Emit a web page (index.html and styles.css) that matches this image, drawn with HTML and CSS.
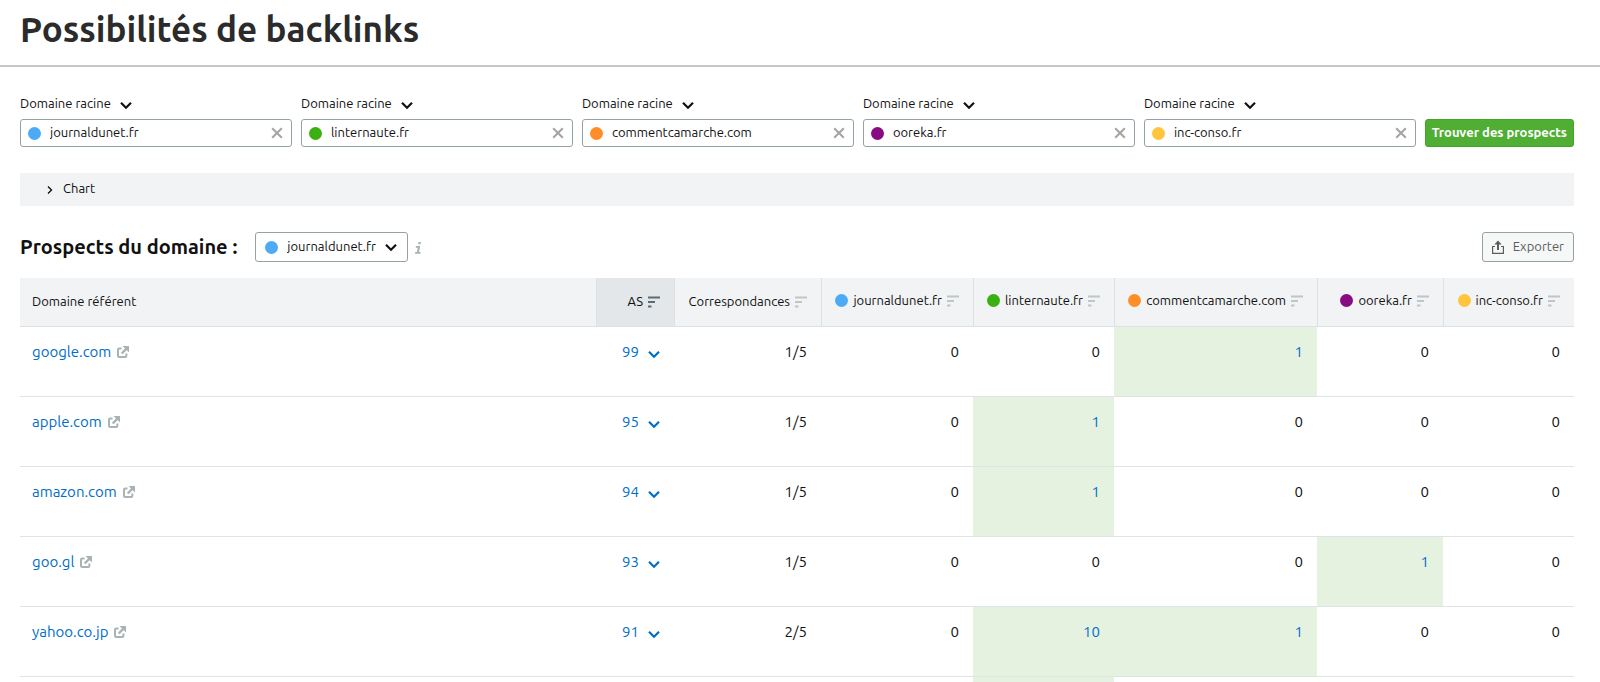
FILE: index.html
```html
<!DOCTYPE html>
<html lang="fr">
<head>
<meta charset="utf-8">
<meta name="viewport" content="width=device-width, initial-scale=1">
<title>Possibilités de backlinks</title>
<link rel="stylesheet" href="styles.css">
</head>
<body>
<svg class="sprite" aria-hidden="true">
  <symbol id="chevron" viewBox="0 0 12 12"><path d="M1 3.800 6 8.800 11 3.800" fill="none" stroke="currentColor" stroke-width="2.2"/></symbol>
  <symbol id="arrow-right" viewBox="0 0 6 10"><path d="M1 1.5 4.5 5 1 8.5" fill="none" stroke="currentColor" stroke-width="1.4"/></symbol>
  <symbol id="cross" viewBox="0 0 12 12"><path d="M1.2 1.2l9.6 9.6M10.8 1.2 1.2 10.8" fill="none" stroke="currentColor" stroke-width="2.1"/></symbol>
  <symbol id="sort" viewBox="0 0 12 12"><path d="M0 1.5h12M0 6h7M0 10.5h3.5" fill="none" stroke="currentColor" stroke-width="2"/></symbol>
  <symbol id="external" viewBox="0 0 12 12"><path d="M4.5 2.6H2.2Q1 2.6 1 3.8v6Q1 11 2.2 11h6Q9.4 11 9.4 9.800V7.500" fill="none" stroke="currentColor" stroke-width="2"/><path d="M4.700 7.500 9.500 2.700" fill="none" stroke="currentColor" stroke-width="2.400"/><path d="M5.500 0H12v6.500z" fill="currentColor"/></symbol>
  <symbol id="upload" viewBox="0 0 12 14"><path d="M3 6.500H.6v6.900h10.800V6.500H9" fill="none" stroke="currentColor" stroke-width="1.200"/><path d="M6 10V3" fill="none" stroke="currentColor" stroke-width="2"/><path d="M2.300 4.500 6 .4l3.700 4.100z" fill="currentColor"/></symbol>
  <symbol id="info" viewBox="0 0 7 12"><path d="M3.600 0h2.400l-.5 2.200H3.100zM1 4h4.200L4 10h1.700l-.3 1.700H0L.3 10h1.600l.8-4.300H.7z" fill="currentColor"/></symbol>
</svg>

<header class="page-header"><h1 class="page-title">Possibilités de backlinks</h1></header>

<main class="content">
  <form class="compare" onsubmit="return false">
    <div class="field">
      <span class="picker"><select class="picker-select" aria-label="Type de cible 1"><option>Domaine racine</option></select><svg class="chevron"><use href="#chevron"/></svg></span>
      <div class="box"><span class="dot blue"></span><input class="box-input" aria-label="Domaine 1" value="journaldunet.fr"><button class="clear" type="button" aria-label="Effacer"><svg class="cross"><use href="#cross"/></svg></button></div>
    </div>
    <div class="field">
      <span class="picker"><select class="picker-select" aria-label="Type de cible 2"><option>Domaine racine</option></select><svg class="chevron"><use href="#chevron"/></svg></span>
      <div class="box"><span class="dot green"></span><input class="box-input" aria-label="Domaine 2" value="linternaute.fr"><button class="clear" type="button" aria-label="Effacer"><svg class="cross"><use href="#cross"/></svg></button></div>
    </div>
    <div class="field">
      <span class="picker"><select class="picker-select" aria-label="Type de cible 3"><option>Domaine racine</option></select><svg class="chevron"><use href="#chevron"/></svg></span>
      <div class="box"><span class="dot orange"></span><input class="box-input" aria-label="Domaine 3" value="commentcamarche.com"><button class="clear" type="button" aria-label="Effacer"><svg class="cross"><use href="#cross"/></svg></button></div>
    </div>
    <div class="field">
      <span class="picker"><select class="picker-select" aria-label="Type de cible 4"><option>Domaine racine</option></select><svg class="chevron"><use href="#chevron"/></svg></span>
      <div class="box"><span class="dot purple"></span><input class="box-input" aria-label="Domaine 4" value="ooreka.fr"><button class="clear" type="button" aria-label="Effacer"><svg class="cross"><use href="#cross"/></svg></button></div>
    </div>
    <div class="field">
      <span class="picker"><select class="picker-select" aria-label="Type de cible 5"><option>Domaine racine</option></select><svg class="chevron"><use href="#chevron"/></svg></span>
      <div class="box"><span class="dot yellow"></span><input class="box-input" aria-label="Domaine 5" value="inc-conso.fr"><button class="clear" type="button" aria-label="Effacer"><svg class="cross"><use href="#cross"/></svg></button></div>
    </div>
    <button class="submit" type="submit">Trouver des prospects</button>
  </form>

  <button class="chart-toggle" type="button" aria-expanded="false"><svg class="arrow"><use href="#arrow-right"/></svg>Chart</button>

  <div class="toolbar">
    <h2 class="section-title"><label for="target">Prospects du domaine :</label></h2>
    <span class="target"><span class="dot blue"></span><span class="picker"><select class="picker-select" id="target"><option>journaldunet.fr</option></select><svg class="chevron"><use href="#chevron"/></svg></span></span>
    <svg class="info" role="img" aria-label="Information"><use href="#info"/></svg>
    <button class="export" type="button"><svg class="upload"><use href="#upload"/></svg>Exporter</button>
  </div>

  <table class="prospects">
    <colgroup><col><col class="c-as"><col class="c-match"><col class="c-blue"><col class="c-green"><col class="c-orange"><col class="c-purple"><col class="c-yellow"></colgroup>
    <thead>
      <tr>
        <th class="name">Domaine référent</th>
        <th class="sorted"><button class="sort">AS<svg class="sort-icon"><use href="#sort"/></svg></button></th>
        <th><button class="sort">Correspondances<svg class="sort-icon"><use href="#sort"/></svg></button></th>
        <th class="domain"><button class="sort"><span class="dot blue"></span>journaldunet.fr<svg class="sort-icon"><use href="#sort"/></svg></button></th>
        <th class="domain"><button class="sort"><span class="dot green"></span>linternaute.fr<svg class="sort-icon"><use href="#sort"/></svg></button></th>
        <th class="domain"><button class="sort"><span class="dot orange"></span>commentcamarche.com<svg class="sort-icon"><use href="#sort"/></svg></button></th>
        <th class="domain"><button class="sort"><span class="dot purple"></span>ooreka.fr<svg class="sort-icon"><use href="#sort"/></svg></button></th>
        <th class="domain"><button class="sort"><span class="dot yellow"></span>inc-conso.fr<svg class="sort-icon"><use href="#sort"/></svg></button></th>
      </tr>
    </thead>
    <tbody>
      <tr><td class="name"><a class="link" href="#">google.com<svg class="external"><use href="#external"/></svg></a></td><td><button class="score">99<svg class="chevron"><use href="#chevron"/></svg></button></td><td>1/5</td><td>0</td><td>0</td><td class="hit"><a href="#">1</a></td><td>0</td><td>0</td></tr>
      <tr><td class="name"><a class="link" href="#">apple.com<svg class="external"><use href="#external"/></svg></a></td><td><button class="score">95<svg class="chevron"><use href="#chevron"/></svg></button></td><td>1/5</td><td>0</td><td class="hit"><a href="#">1</a></td><td>0</td><td>0</td><td>0</td></tr>
      <tr><td class="name"><a class="link" href="#">amazon.com<svg class="external"><use href="#external"/></svg></a></td><td><button class="score">94<svg class="chevron"><use href="#chevron"/></svg></button></td><td>1/5</td><td>0</td><td class="hit"><a href="#">1</a></td><td>0</td><td>0</td><td>0</td></tr>
      <tr><td class="name"><a class="link" href="#">goo.gl<svg class="external"><use href="#external"/></svg></a></td><td><button class="score">93<svg class="chevron"><use href="#chevron"/></svg></button></td><td>1/5</td><td>0</td><td>0</td><td>0</td><td class="hit"><a href="#">1</a></td><td>0</td></tr>
      <tr><td class="name"><a class="link" href="#">yahoo.co.jp<svg class="external"><use href="#external"/></svg></a></td><td><button class="score">91<svg class="chevron"><use href="#chevron"/></svg></button></td><td>2/5</td><td>0</td><td class="hit"><a href="#">10</a></td><td class="hit"><a href="#">1</a></td><td>0</td><td>0</td></tr>
      <tr class="next"><td></td><td></td><td></td><td></td><td class="hit"></td><td></td><td></td><td></td></tr>
    </tbody>
  </table>
</main>
</body>
</html>
```
FILE: styles.css
```css
* { box-sizing: border-box; }
body {
  margin: 0;
  background: #fff;
  color: #111;
  font: 13px/20px "Ubuntu", "Noto Sans", sans-serif;
}
button, input, select {
  margin: 0;
  padding: 0;
  border: 0;
  background: none;
  color: inherit;
  font: inherit;
}
button, select { cursor: pointer; }
svg { display: block; flex: none; }
.sprite { display: none; }

.page-header {
  padding: 6px 20px 13px;
  border-bottom: 2px solid #c6c6c6;
}
.page-title {
  margin: 0;
  color: #2b2b2b;
  font-size: 35px;
  font-weight: 600;
  line-height: 46px;
}
.content { padding: 26px 26px 0 20px; }

.dot {
  flex: none;
  width: 13px;
  height: 13px;
  border-radius: 50%;
}
.blue { background: #4dabf5; }
.green { background: #3ab011; }
.orange { background: #ff8e29; }
.purple { background: #880b82; }
.yellow { background: #ffc53d; }

.compare {
  display: flex;
  align-items: flex-end;
  gap: 9px;
}
.field { flex: 1; min-width: 0; }
.picker {
  display: inline-flex;
  align-items: center;
  gap: 9px;
}
.picker-select { appearance: none; }
.chevron { width: 12px; height: 12px; margin-top: 3px; }
.field .picker { display: flex; margin-bottom: 6px; }
.box {
  display: flex;
  align-items: center;
  height: 28px;
  padding: 0 8px 0 7px;
  border: 1px solid #94a2a8;
  border-radius: 3px;
}
.box-input {
  flex: 1;
  min-width: 0;
  margin-left: 9px;
  height: 24px;
  padding-bottom: 2px;
  outline: 0;
}
.clear { color: #a5a5a5; }
.cross { width: 12px; height: 12px; }
.submit {
  height: 28px;
  padding: 0 6px 2px;
  border: 1px solid #3fa823;
  border-radius: 3px;
  background: #4fae33;
  color: #fff;
  font-weight: 600;
  white-space: nowrap;
}

.chart-toggle {
  display: flex;
  align-items: center;
  gap: 10px;
  width: 100%;
  height: 33px;
  margin-top: 26px;
  padding: 0 27px 3px;
  background: #f1f3f5;
}
.arrow { width: 6px; height: 10px; margin-top: 4px; }

.toolbar {
  display: flex;
  align-items: center;
  height: 30px;
  margin: 26px 0 16px;
}
.section-title {
  margin: 0 18px 0 0;
  font-size: 20px;
  font-weight: 600;
}
.target {
  display: flex;
  align-items: center;
  gap: 9px;
  height: 30px;
  padding: 0 10px 0 9px;
  border: 1px solid #94a2a8;
  border-radius: 3px;
}
.target .picker { padding-bottom: 3px; }
.info {
  width: 7px;
  height: 12px;
  margin: 2px 0 0 7px;
  color: #a9b1b4;
}
.export {
  display: flex;
  align-items: center;
  gap: 9px;
  height: 30px;
  margin-left: auto;
  padding: 0 9px 2px;
  border: 1px solid #94a2a8;
  border-radius: 3px;
  background: #f6f8f8;
  color: #5d5d5d;
}
.upload { width: 12px; height: 14px; margin-top: 2px; }

.prospects {
  width: 100%;
  border-collapse: separate;
  border-spacing: 0;
  table-layout: fixed;
}
.c-as { width: 78px; }
.c-match { width: 147px; }
.c-blue { width: 152px; }
.c-green { width: 141px; }
.c-orange { width: 203px; }
.c-purple { width: 126px; }
.c-yellow { width: 131px; }

.prospects th {
  height: 49px;
  padding: 0 14px 2px 0;
  border-bottom: 1px solid #dce1e4;
  border-left: 1px solid #dce2e4;
  background: #f1f3f5;
  font-weight: 400;
  text-align: right;
}
.prospects .domain { padding-bottom: 4px; }
.prospects th.name { border-left: 0; }
.prospects th.sorted { background: #e4e7e9; }
.sort {
  display: flex;
  align-items: center;
  gap: 5px;
  margin-left: auto;
  white-space: nowrap;
}
.sort-icon { width: 12px; height: 12px; margin-top: 2px; color: #bfc6c9; }
.sorted .sort-icon { color: #5a6d75; }

.prospects td {
  height: 70px;
  padding: 15px 14px 0 0;
  border-bottom: 1px solid #dfe5e6;
  font-size: 15px;
  text-align: right;
  vertical-align: top;
}
.prospects .name { padding-left: 12px; text-align: left; }
.prospects a, .score { color: #006dca; text-decoration: none; }
.link, .score { display: inline-flex; align-items: center; gap: 6px; }
.score { gap: 9px; }
.external { width: 12px; height: 12px; color: #a9b3b5; }
.prospects .hit { background: #e5f2e0; }
.prospects .next td { height: 5px; padding: 0; border: 0; }
```
